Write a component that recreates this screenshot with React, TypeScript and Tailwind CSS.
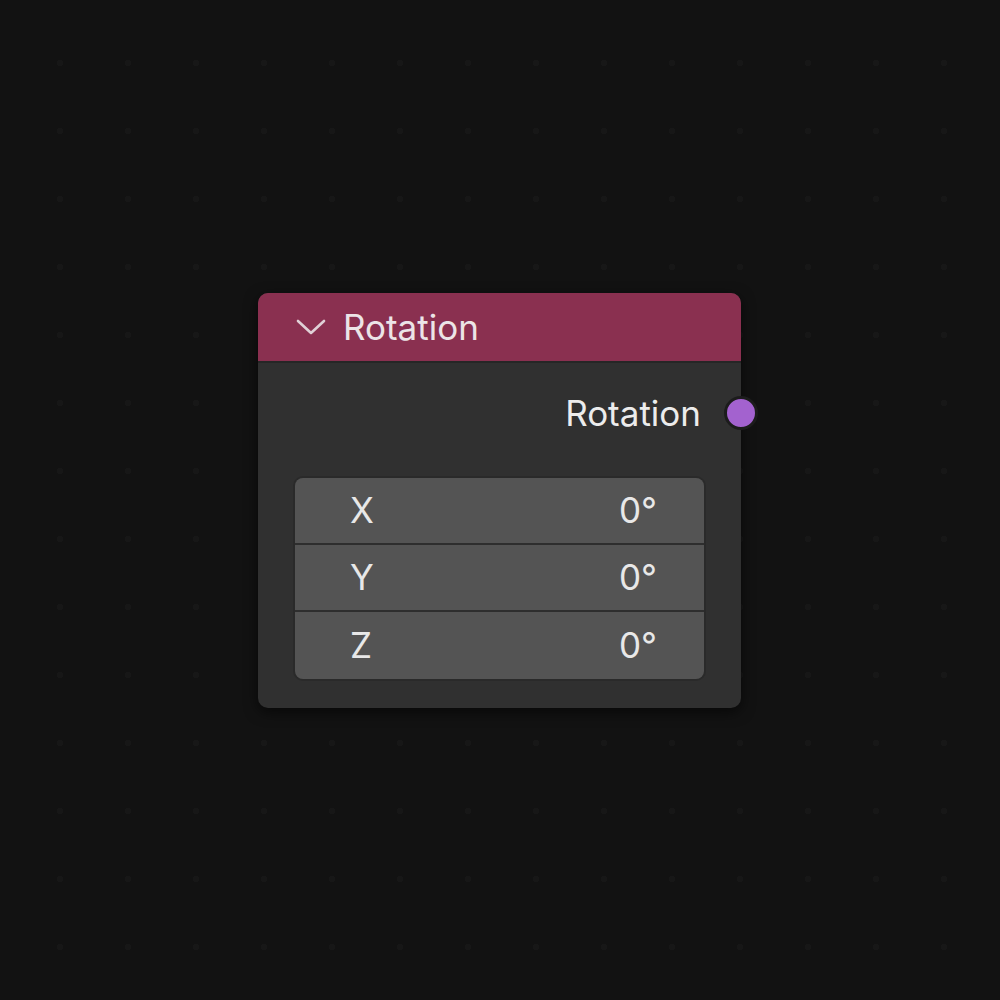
import React from "react";

function Row({ label, last }: { label: string; last?: boolean }) {
  return (
    <div
      className={`flex h-[67px] items-center justify-between bg-[#545454] pl-[55px] pr-[47px] ${
        last ? "" : "border-b-[2px] border-[#2e2e2e]"
      }`}
    >
      <span className="text-[35px] text-[#e8e8e8]">{label}</span>
      <span className="text-[35px] text-[#e8e8e8]">0°</span>
    </div>
  );
}

export default function App() {
  return (
    <div
      className="relative h-[1000px] w-[1000px] overflow-hidden bg-[#121212]"
      style={{ fontFamily: "Inter, 'Noto Sans', sans-serif" }}
    >
      <div className="absolute inset-0 bg-[radial-gradient(#171717_3px,transparent_3px)] bg-[size:68px_68px] bg-[position:26px_29px]" />
      <div className="absolute left-[258px] top-[293px] w-[483px] rounded-[10px] bg-[#303030] shadow-[0_4px_14px_rgba(0,0,0,0.6)]">
        <div className="flex h-[70px] items-center gap-[17px] rounded-t-[10px] bg-[#8a3050] pl-[38px] border-b-[2px] border-[#262626]">
          <svg width="30" height="18" viewBox="0 0 30 18" fill="none">
            <path d="M2 3 L15 15 L28 3" stroke="#e0d0d6" strokeWidth="2.6" strokeLinecap="round" strokeLinejoin="round" />
          </svg>
          <span className="text-[35px] text-[#ece4e7]">Rotation</span>
        </div>
        <div className="relative mt-[24px] flex h-[52px] items-center justify-end pr-[40px]">
          <span className="text-[35px] text-[#ececec]">Rotation</span>
          <div className="absolute right-[-17px] top-[9px] h-[34px] w-[34px] rounded-full border-[3px] border-[#1c1c1c] bg-[#a362cf]" />
        </div>
        <div className="px-[35px] pt-[37px] pb-[27px]">
          <div className="overflow-hidden rounded-[10px] border-[2px] border-[#2a2a2a]">
            <Row label="X" />
            <Row label="Y" />
            <Row label="Z" last />
          </div>
        </div>
      </div>
    </div>
  );
}
